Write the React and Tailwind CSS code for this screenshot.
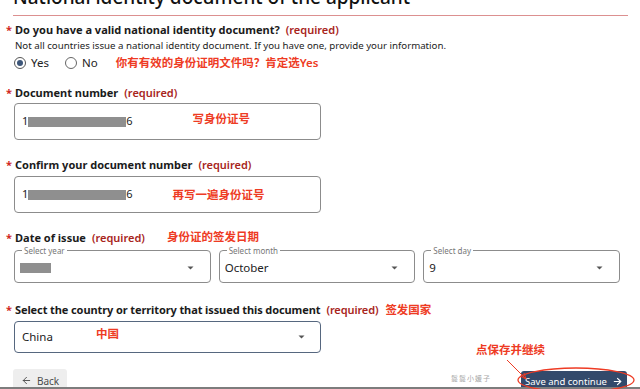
import { ArrowLeft, ArrowRight } from "lucide-react";

const font = { fontFamily: '"Noto Sans", "Noto Sans CJK SC", sans-serif' };

function Label({ children, note, className = "" }) {
  return (
    <div className={"flex h-[16px] items-center pl-[6px] text-[11px] leading-[16px] " + className}>
      <span className="w-[9px] text-[#d0271d] font-bold">*</span>
      <span className="font-bold text-[#1b1b1b]">{children}</span>
      <span className="ml-[6px] font-semibold text-[#a8251c]">(required)</span>
      {note}
    </div>
  );
}

function Note({ children, className = "" }) {
  return (
    <span className={"text-[11.5px] leading-[16px] font-semibold text-[#ee3b24] " + className}>{children}</span>
  );
}

function Caret() {
  return (
    <svg width="7" height="4" viewBox="0 0 7 4" className="shrink-0">
      <path d="M0.5 0.5 L3.5 3.5 L6.5 0.5 Z" fill="#555" />
    </svg>
  );
}

function Redacted({ w }) {
  return <span className="inline-block h-[10px] bg-[#8f8f8f]" style={{ width: w }} />;
}

function DocInput({ note, className = "" }) {
  return (
    <div
      className={
        "ml-[14px] flex h-[37px] w-[307px] items-center rounded-[4px] border border-[#8c8c8c] px-[7px] text-[11px] text-[#222] " +
        className
      }
    >
      <span>1</span>
      <Redacted w="98px" />
      <span>6</span>
      <Note className={note.cls}>{note.text}</Note>
    </div>
  );
}

function DateSelect({ legend, children }) {
  return (
    <fieldset className="h-[37px] rounded-[4px] border border-[#8c8c8c] px-[4px]">
      <legend className="ml-[3px] px-[2px] text-[8px] leading-[9px] text-[#777]">{legend}</legend>
      <div className="flex h-[26px] items-center justify-between pl-[1px] pr-[12px] text-[11.5px] text-[#222]">
        <span className="flex items-center">{children}</span>
        <Caret />
      </div>
    </fieldset>
  );
}

export default function App() {
  return (
    <div className="relative h-[389px] w-[640px] overflow-hidden bg-white" style={font}>
      <h1 className="-mt-[15px] ml-[13px] h-[24px] whitespace-nowrap text-[19px] font-medium leading-[24px] text-[#111]">
        National identity document of the applicant
      </h1>
      <div className="ml-[13px] mt-[6px] h-[1px] w-[615px] bg-[#dc9090]" />

      <Label className="mt-[6px]">Do you have a valid national identity document?</Label>
      <p className="mt-[1px] h-[14px] pl-[15px] text-[9.7px] leading-[14px] text-[#222]">
        Not all countries issue a national identity document. If you have one, provide your information.
      </p>
      <div className="mt-[2px] flex h-[16px] items-center pl-[14px] text-[11.5px] leading-[16px] text-[#222]">
        <span className="flex h-[12px] w-[12px] items-center justify-center rounded-full border border-[#555]">
          <span className="h-[6px] w-[6px] rounded-full bg-[#3d5679]" />
        </span>
        <span className="ml-[5px]">Yes</span>
        <span className="ml-[16px] h-[12px] w-[12px] rounded-full border border-[#666]" />
        <span className="ml-[5px]">No</span>
        <Note className="ml-[18px]">你有有效的身份证明文件吗？肯定选Yes</Note>
      </div>

      <Label className="mt-[14px]">Document number</Label>
      <DocInput className="mt-[2px]" note={{ text: "写身份证号", cls: "ml-[60px] -mt-[6px]" }} />

      <Label className="mt-[17px]">Confirm your document number</Label>
      <DocInput className="mt-[3px]" note={{ text: "再写一遍身份证号", cls: "ml-[40px]" }} />

      <Label className="mt-[17px]" note={<Note className="ml-[22px] -mt-[3px]">身份证的签发日期</Note>}>
        Date of issue
      </Label>
      <div className="ml-[14px] grid w-[606px] grid-cols-3 gap-[8px]">
        <DateSelect legend="Select year">
          <Redacted w="31px" />
        </DateSelect>
        <DateSelect legend="Select month">October</DateSelect>
        <DateSelect legend="Select day">9</DateSelect>
      </div>

      <Label className="mt-[19px] tracking-[-0.1px]" note={<Note className="ml-[7px]">签发国家</Note>}>
        Select the country or territory that issued this document
      </Label>
      <div className="ml-[14px] mt-[3px] flex h-[32px] w-[307px] items-center justify-between rounded-[4px] border-[1.5px] border-[#56677f] pl-[7px] pr-[15px] text-[11.5px] text-[#222]">
        <span className="flex items-center">
          China
          <Note className="ml-[43px] -mt-[6px]">中国</Note>
        </span>
        <Caret />
      </div>

      <div className="mt-[16px] flex h-[18px] items-start overflow-hidden pl-[13px] pr-[13px]">
        <div className="flex h-[24px] w-[54px] items-start justify-center gap-[5px] rounded-[3px] bg-[#eeeeee] pt-[5px] text-[10px] leading-[14px] text-[#4a4a4a]">
          <ArrowLeft size={11} strokeWidth={2} className="mt-[1px]" />
          Back
        </div>
        <span
          className="ml-auto mt-[4px] text-[7px] leading-[10px] tracking-[1px] text-[#a8a8a8]"
          style={{ fontFamily: '"Noto Sans CJK SC", serif' }}
        >
          鬘鬘小媛子
        </span>
        <div className="ml-[30px] mt-[2px] flex h-[24px] w-[106px] items-start justify-center gap-[5px] rounded-[3px] bg-[#334a6b] pt-[4px] text-[9.5px] leading-[13px] text-white">
          Save and continue
          <ArrowRight size={11} strokeWidth={2.5} className="mt-[1px]" />
        </div>
      </div>
      <div className="h-[3px] bg-[#7d7d7d]" />

      <span className="absolute left-[476px] top-[342px] text-[11.5px] leading-[16px] font-bold text-[#ee3b24]">
        点保存并继续
      </span>
      <svg className="pointer-events-none absolute left-0 top-0" width="640" height="389">
        <line x1="507" y1="360" x2="525" y2="378" stroke="#ee3b24" strokeWidth="1" />
        <path d="M520 376 L526 379 L524 373" fill="none" stroke="#ee3b24" strokeWidth="1" />
        <ellipse cx="576" cy="380" rx="58" ry="12" fill="none" stroke="#ee3b24" strokeWidth="1.3" />
      </svg>
    </div>
  );
}
